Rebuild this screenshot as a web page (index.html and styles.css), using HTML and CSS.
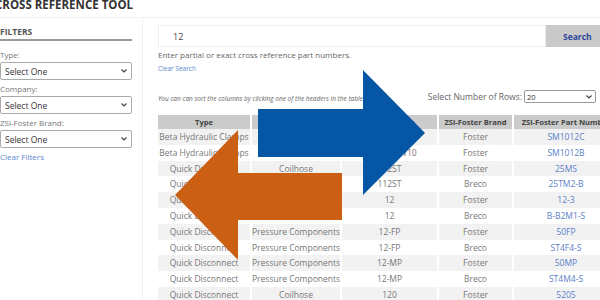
FILE: index.html
```html
<!DOCTYPE html>
<html lang="en">
	<head>
		<meta charset="UTF-8" />
		<meta name="viewport" content="width=device-width, initial-scale=1.0" />
		<title>Cross Reference Tool</title>
		<link rel="stylesheet" href="styles.css">
	</head>
	<body>
		<div class="page">
			<div class="page-header">
				<h1>CROSS REFERENCE TOOL</h1>
			</div>
			<div class="page-body">
				<div class="filters">
					<div class="filters-title">FILTERS</div>
					<label class="filter-label">Type:</label>
					<div class="select-wrap">
						<select class="filter-select"><option>Select One</option></select>
						<svg class="caret" width="6" height="4" viewBox="0 0 6 4"><path d="M0.5 0.5 L3 3 L5.5 0.5" fill="none" stroke="#444" stroke-width="1.2"/></svg>
					</div>
					<label class="filter-label">Company:</label>
					<div class="select-wrap">
						<select class="filter-select"><option>Select One</option></select>
						<svg class="caret" width="6" height="4" viewBox="0 0 6 4"><path d="M0.5 0.5 L3 3 L5.5 0.5" fill="none" stroke="#444" stroke-width="1.2"/></svg>
					</div>
					<label class="filter-label">ZSi-Foster Brand:</label>
					<div class="select-wrap">
						<select class="filter-select"><option>Select One</option></select>
						<svg class="caret" width="6" height="4" viewBox="0 0 6 4"><path d="M0.5 0.5 L3 3 L5.5 0.5" fill="none" stroke="#444" stroke-width="1.2"/></svg>
					</div>
					<a class="link clear-filters" href="#">Clear Filters</a>
				</div>
				<div class="results">
					<div class="search-row">
						<input class="search-input" type="text" value="12" />
						<button class="search-button">Search</button>
					</div>
					<p class="search-help">Enter partial or exact cross reference part numbers.</p>
					<a class="link clear-search" href="#">Clear Search</a>
					<div class="table-tools">
						<p class="sort-note">You can can sort the columns by clicking one of the headers in the table.</p>
						<div class="rows-picker">
							<span>Select Number of Rows:</span>
							<div class="select-wrap">
								<select class="rows-select"><option>20</option></select>
								<svg class="caret rows-caret" width="6" height="4" viewBox="0 0 6 4"><path d="M0.5 0.5 L3 3 L5.5 0.5" fill="none" stroke="#444" stroke-width="1.2"/></svg>
							</div>
						</div>
					</div>
					<table class="xref-table">
						<thead>
							<tr>
								<th class="col-type">Type</th>
								<th class="col-company">Company</th>
								<th class="col-part">Part Number</th>
								<th class="col-brand">ZSi-Foster Brand</th>
								<th class="col-zsi">ZSi-Foster Part Number</th>
							</tr>
						</thead>
						<tbody>
							<tr><td>Beta Hydraulic Clamps</td><td>Stauff</td><td>SP-12M-W10</td><td>Foster</td><td><a href="#">SM1012C</a></td></tr>
							<tr><td>Beta Hydraulic Clamps</td><td>Stauff</td><td>MD-12M-W10</td><td>Foster</td><td><a href="#">SM1012B</a></td></tr>
							<tr><td>Quick Disconnect</td><td>Coilhose</td><td>112ST</td><td>Foster</td><td><a href="#">25MS</a></td></tr>
							<tr><td>Quick Disconnect</td><td>Coilhose</td><td>112ST</td><td>Breco</td><td><a href="#">25TM2-B</a></td></tr>
							<tr><td>Quick Disconnect</td><td>Hansen</td><td>12</td><td>Foster</td><td><a href="#">12-3</a></td></tr>
							<tr><td>Quick Disconnect</td><td>Hansen</td><td>12</td><td>Breco</td><td><a href="#">B-B2M1-S</a></td></tr>
							<tr><td>Quick Disconnect</td><td>Pressure Components</td><td>12-FP</td><td>Foster</td><td><a href="#">50FP</a></td></tr>
							<tr><td>Quick Disconnect</td><td>Pressure Components</td><td>12-FP</td><td>Breco</td><td><a href="#">ST4F4-S</a></td></tr>
							<tr><td>Quick Disconnect</td><td>Pressure Components</td><td>12-MP</td><td>Foster</td><td><a href="#">50MP</a></td></tr>
							<tr><td>Quick Disconnect</td><td>Pressure Components</td><td>12-MP</td><td>Breco</td><td><a href="#">ST4M4-S</a></td></tr>
							<tr><td>Quick Disconnect</td><td>Coilhose</td><td>120</td><td>Foster</td><td><a href="#">5205</a></td></tr>
						</tbody>
					</table>
				</div>
			</div>
		</div>
		<!-- swap arrows drawn over the page -->
		<svg class="arrows" width="600" height="300" viewBox="0 0 600 300">
			<polygon points="258,109 363,109 363,70 425,133 363,195 363,157 258,157" fill="#0556a5"/>
			<polygon points="342,173 238,173 238,130 175,195 238,260 238,220 342,220" fill="#cb6015"/>
		</svg>
	</body>
</html>
```

FILE: styles.css
```css
body {
	margin: 0;
	padding: 0;
	background: #fff;
	color: #666;
	font-family: "Open Sans", Arial, sans-serif;
	overflow: hidden;
	width: 600px;
	height: 300px;
}
.page {
	width: 640px;
}
.page-header {
	height: 17px;
	border-bottom: 1px solid #f0f0f0;
	margin-left: -5px;
}
.page-header h1 {
	margin: 0;
	font-size: 11.5px;
	line-height: 10px;
	font-weight: bold;
	color: #333;
}
.page-body {
	display: flex;
}
.filters {
	width: 132px;
	padding-top: 8px;
	padding-right: 10px;
	border-right: 1px solid #f1f1f1;
	height: 300px;
	display: flex;
	flex-direction: column;
}
.filters-title {
	font-size: 8.5px;
	font-weight: bold;
	color: #555;
	line-height: 12px;
	padding-bottom: 1px;
	border-bottom: 2px solid #999;
	margin-bottom: 5px;
}
.filter-label {
	font-size: 8px;
	color: #777;
	line-height: 12px;
	margin-top: 3px;
	margin-bottom: 1px;
}
.select-wrap {
	position: relative;
}
.filter-select {
	display: block;
	-webkit-appearance: none;
	appearance: none;
	width: 132px;
	height: 18px;
	border: 1px solid #aaa;
	border-radius: 2px;
	background: #fff;
	font-family: "Open Sans", Arial, sans-serif;
	font-size: 8.5px;
	color: #333;
	padding: 0 4px;
	margin: 0;
}
.caret {
	position: absolute;
	right: 5px;
	top: 7px;
}
.link {
	color: #5b88cf;
	text-decoration: none;
}
.clear-filters {
	font-size: 8px;
	line-height: 12px;
	margin-top: 3px;
}
.results {
	margin-left: 15px;
	padding-top: 7px;
	flex: 1;
}
.search-row {
	display: flex;
	height: 22px;
}
.search-input {
	width: 388px;
	height: 22px;
	box-sizing: border-box;
	border: 1px solid #eee;
	font-family: "Open Sans", Arial, sans-serif;
	font-size: 9px;
	color: #444;
	padding: 0 0 0 14px;
	margin: 0;
	outline: none;
}
.search-button {
	width: 60px;
	height: 22px;
	border: none;
	background: #c9c9c9;
	color: #2b479a;
	font-family: "Open Sans", Arial, sans-serif;
	font-size: 8.5px;
	font-weight: bold;
	padding: 0;
	text-align: left;
	text-indent: 17px;
	margin: 0;
}
.search-help {
	margin: 2px 0 0;
	font-size: 8px;
	line-height: 12px;
	color: #666;
}
.clear-search {
	display: block;
	font-size: 6.5px;
	line-height: 10px;
	margin-top: 3px;
}
.table-tools {
	display: flex;
	justify-content: space-between;
	align-items: center;
	margin-top: 16px;
	width: 438px;
}
.sort-note {
	margin: 4px 0 0;
	font-size: 6.5px;
	font-style: italic;
	color: #666;
}
.rows-picker {
	display: flex;
	align-items: center;
	gap: 2px;
	font-size: 8.5px;
	color: #666;
}
.rows-select {
	display: block;
	-webkit-appearance: none;
	appearance: none;
	width: 72px;
	height: 13px;
	border: 1px solid #999;
	border-radius: 2px;
	background: #fff;
	font-family: "Open Sans", Arial, sans-serif;
	font-size: 7.5px;
	color: #333;
	padding: 0 2px;
	margin: 0;
}
.rows-caret {
	top: 5px;
	right: 4px;
}
.xref-table {
	margin-top: 12px;
	border-collapse: collapse;
	table-layout: fixed;
	width: 452px;
	font-size: 8.5px;
}
.xref-table th {
	background: #cbcbcb;
	color: #444;
	font-size: 7.6px;
	font-weight: bold;
	height: 14px;
	line-height: 14px;
	padding: 0;
	border-right: 2px solid #fff;
	white-space: nowrap;
	overflow: hidden;
}
.xref-table td {
	height: 15.8px;
	line-height: 15.8px;
	padding: 0;
	text-align: center;
	color: #777;
	border-right: 2px solid #fff;
	white-space: nowrap;
	overflow: hidden;
}
.xref-table tbody tr:nth-child(odd) td {
	background: #f2f2f2;
}
.xref-table td a {
	color: #5b7fc9;
	text-decoration: none;
}
.col-type {
	width: 92px;
}
.col-company {
	width: 88px;
}
.col-part {
	width: 95px;
}
.col-brand {
	width: 73px;
}
.col-zsi {
	width: 104px;
}
.arrows {
	position: absolute;
	top: 0;
	left: 0;
}
```
